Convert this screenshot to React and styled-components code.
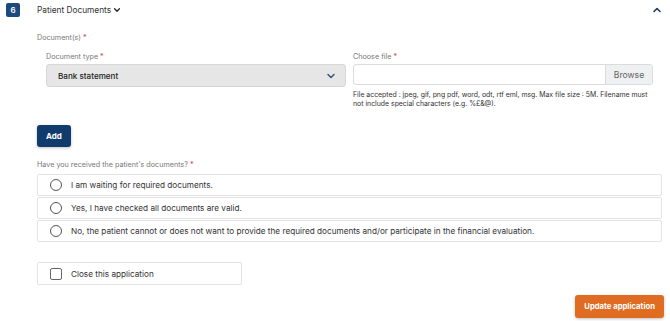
import React, { useState } from "react";
import styled, { createGlobalStyle } from "styled-components";

const Global = createGlobalStyle`
  body {
    margin: 0;
    background: #ffffff;
    font-family: Inter, "Noto Sans", sans-serif;
    color: #2b2b2b;
  }
`;

const Page = styled.div`
  width: 670px;
  height: 321px;
  overflow: hidden;
`;

const Header = styled.div`
  display: flex;
  align-items: center;
  height: 20px;
  padding: 0 8px 0 6px;
`;

const Badge = styled.div`
  width: 14px;
  height: 14px;
  border-radius: 2px;
  background: #1d4a7c;
  color: #fff;
  font-size: 8px;
  font-weight: 600;
  display: flex;
  align-items: center;
  justify-content: center;
`;

const Title = styled.div`
  margin-left: 17px;
  font-size: 8.3px;
  color: #333;
  display: flex;
  align-items: center;
  gap: 2px;
  flex: 1;
`;

const Body = styled.div`
  padding: 13px 8px 0 37px;
`;

const Label = styled.div`
  font-size: 7.2px;
  color: #777;
  line-height: 10px;
  span { color: #d0312d; }
`;

const Grid = styled.div`
  display: grid;
  grid-template-columns: 300px 300px;
  column-gap: 7px;
  margin-top: 9px;
  padding-left: 9px;
`;

const Field = styled.div`
  display: flex;
  flex-direction: column;
  gap: 2px;
`;

const Select = styled.div`
  height: 21px;
  border: 1px solid #d7d7d7;
  border-radius: 3px;
  background: #e6e6e6;
  display: flex;
  align-items: center;
  justify-content: space-between;
  padding: 0 9px 0 11px;
  font-size: 8.1px;
  font-weight: 500;
  color: #222;
`;

const FileBox = styled.div`
  height: 19px;
  border: 1px solid #dcdcdc;
  border-radius: 3px;
  display: flex;
  justify-content: flex-end;
  overflow: hidden;
`;

const Browse = styled.div`
  width: 46px;
  background: #eef0f2;
  border-left: 1px solid #dcdcdc;
  font-size: 8.6px;
  color: #666;
  display: flex;
  align-items: center;
  justify-content: center;
`;

const Help = styled.div`
  font-size: 6.9px;
  line-height: 9px;
  color: #333;
  margin-top: 3px;
`;

const Button = styled.button`
  border: none;
  border-radius: 3px;
  color: #fff;
  font-family: inherit;
  font-weight: 700;
  font-size: ${p => p.$fs}px;
  background: ${p => p.$bg};
  box-shadow: 0 1px 3px rgba(0, 0, 0, 0.25);
  height: ${p => p.$h}px;
  padding: 0 ${p => p.$px}px;
  cursor: pointer;
`;

const AddRow = styled.div`
  margin-top: 15px;
`;

const Question = styled(Label)`
  margin-top: 13px;
`;

const Options = styled.div`
  margin-top: 4px;
  display: flex;
  flex-direction: column;
  gap: 1px;
  width: 625px;
`;

const Option = styled.label`
  height: 22px;
  border: 1px solid #e3e3e3;
  border-radius: 2px;
  box-sizing: border-box;
  display: flex;
  align-items: center;
  padding-left: 12px;
  font-size: 8.2px;
  color: #333;
  gap: 9px;
`;

const Radio = styled.span`
  width: 12px;
  height: 12px;
  border: 1.2px solid #555;
  border-radius: 50%;
  box-sizing: border-box;
  background: ${p => (p.$on ? "radial-gradient(#1d4a7c 40%, #fff 45%)" : "#fff")};
`;

const CloseBox = styled(Option)`
  width: 205px;
  height: 23px;
  margin-top: 20px;
`;

const Check = styled.span`
  width: 12px;
  height: 12px;
  border: 1.2px solid #666;
  border-radius: 2px;
  box-sizing: border-box;
  background: ${p => (p.$on ? "#1d4a7c" : "#fff")};
`;

const Footer = styled.div`
  display: flex;
  justify-content: flex-end;
  margin-top: 10px;
  width: 627px;
`;

const ChevronDown = ({ size = 8, color = "#333" }) => (
  <svg width={size} height={size} viewBox="0 0 10 10">
    <path d="M2 3.5 L5 6.5 L8 3.5" fill="none" stroke={color} strokeWidth="1.6" strokeLinecap="round" strokeLinejoin="round" />
  </svg>
);

const ChevronUp = () => (
  <svg width="10" height="10" viewBox="0 0 10 10">
    <path d="M2 6.5 L5 3.5 L8 6.5" fill="none" stroke="#1d3d66" strokeWidth="1.6" strokeLinecap="round" strokeLinejoin="round" />
  </svg>
);

const options = [
  "I am waiting for required documents.",
  "Yes, I have checked all documents are valid.",
  "No, the patient cannot or does not want to provide the required documents and/or participate in the financial evaluation.",
];

export default function App() {
  const [choice, setChoice] = useState(null);
  const [closed, setClosed] = useState(false);

  return (
    <Page>
      <Global />
      <Header>
        <Badge>6</Badge>
        <Title>
          Patient Documents <ChevronDown size={8} color="#222" />
        </Title>
        <ChevronUp />
      </Header>
      <Body>
        <Label>Document(s) <span>*</span></Label>
        <Grid>
          <Field>
            <Label>Document type <span>*</span></Label>
            <Select>
              Bank statement
              <ChevronDown size={10} color="#3b5b80" />
            </Select>
          </Field>
          <Field>
            <Label>Choose file <span>*</span></Label>
            <FileBox>
              <Browse>Browse</Browse>
            </FileBox>
            <Help>
              File accepted : jpeg, gif, png pdf, word, odt, rtf eml, msg. Max file size : 5M. Filename must not include special characters (e.g. %£&@).
            </Help>
          </Field>
        </Grid>
        <AddRow>
          <Button $bg="#0f3c6c" $h={22} $px={9} $fs={8}>Add</Button>
        </AddRow>
        <Question>Have you received the patient's documents? <span>*</span></Question>
        <Options>
          {options.map((o, i) => (
            <Option key={i} onClick={() => setChoice(i)}>
              <Radio $on={choice === i} />
              {o}
            </Option>
          ))}
        </Options>
        <CloseBox onClick={() => setClosed(!closed)}>
          <Check $on={closed} />
          Close this application
        </CloseBox>
        <Footer>
          <Button $bg="#e06c22" $h={23} $px={9} $fs={7.7}>Update application</Button>
        </Footer>
      </Body>
    </Page>
  );
}
